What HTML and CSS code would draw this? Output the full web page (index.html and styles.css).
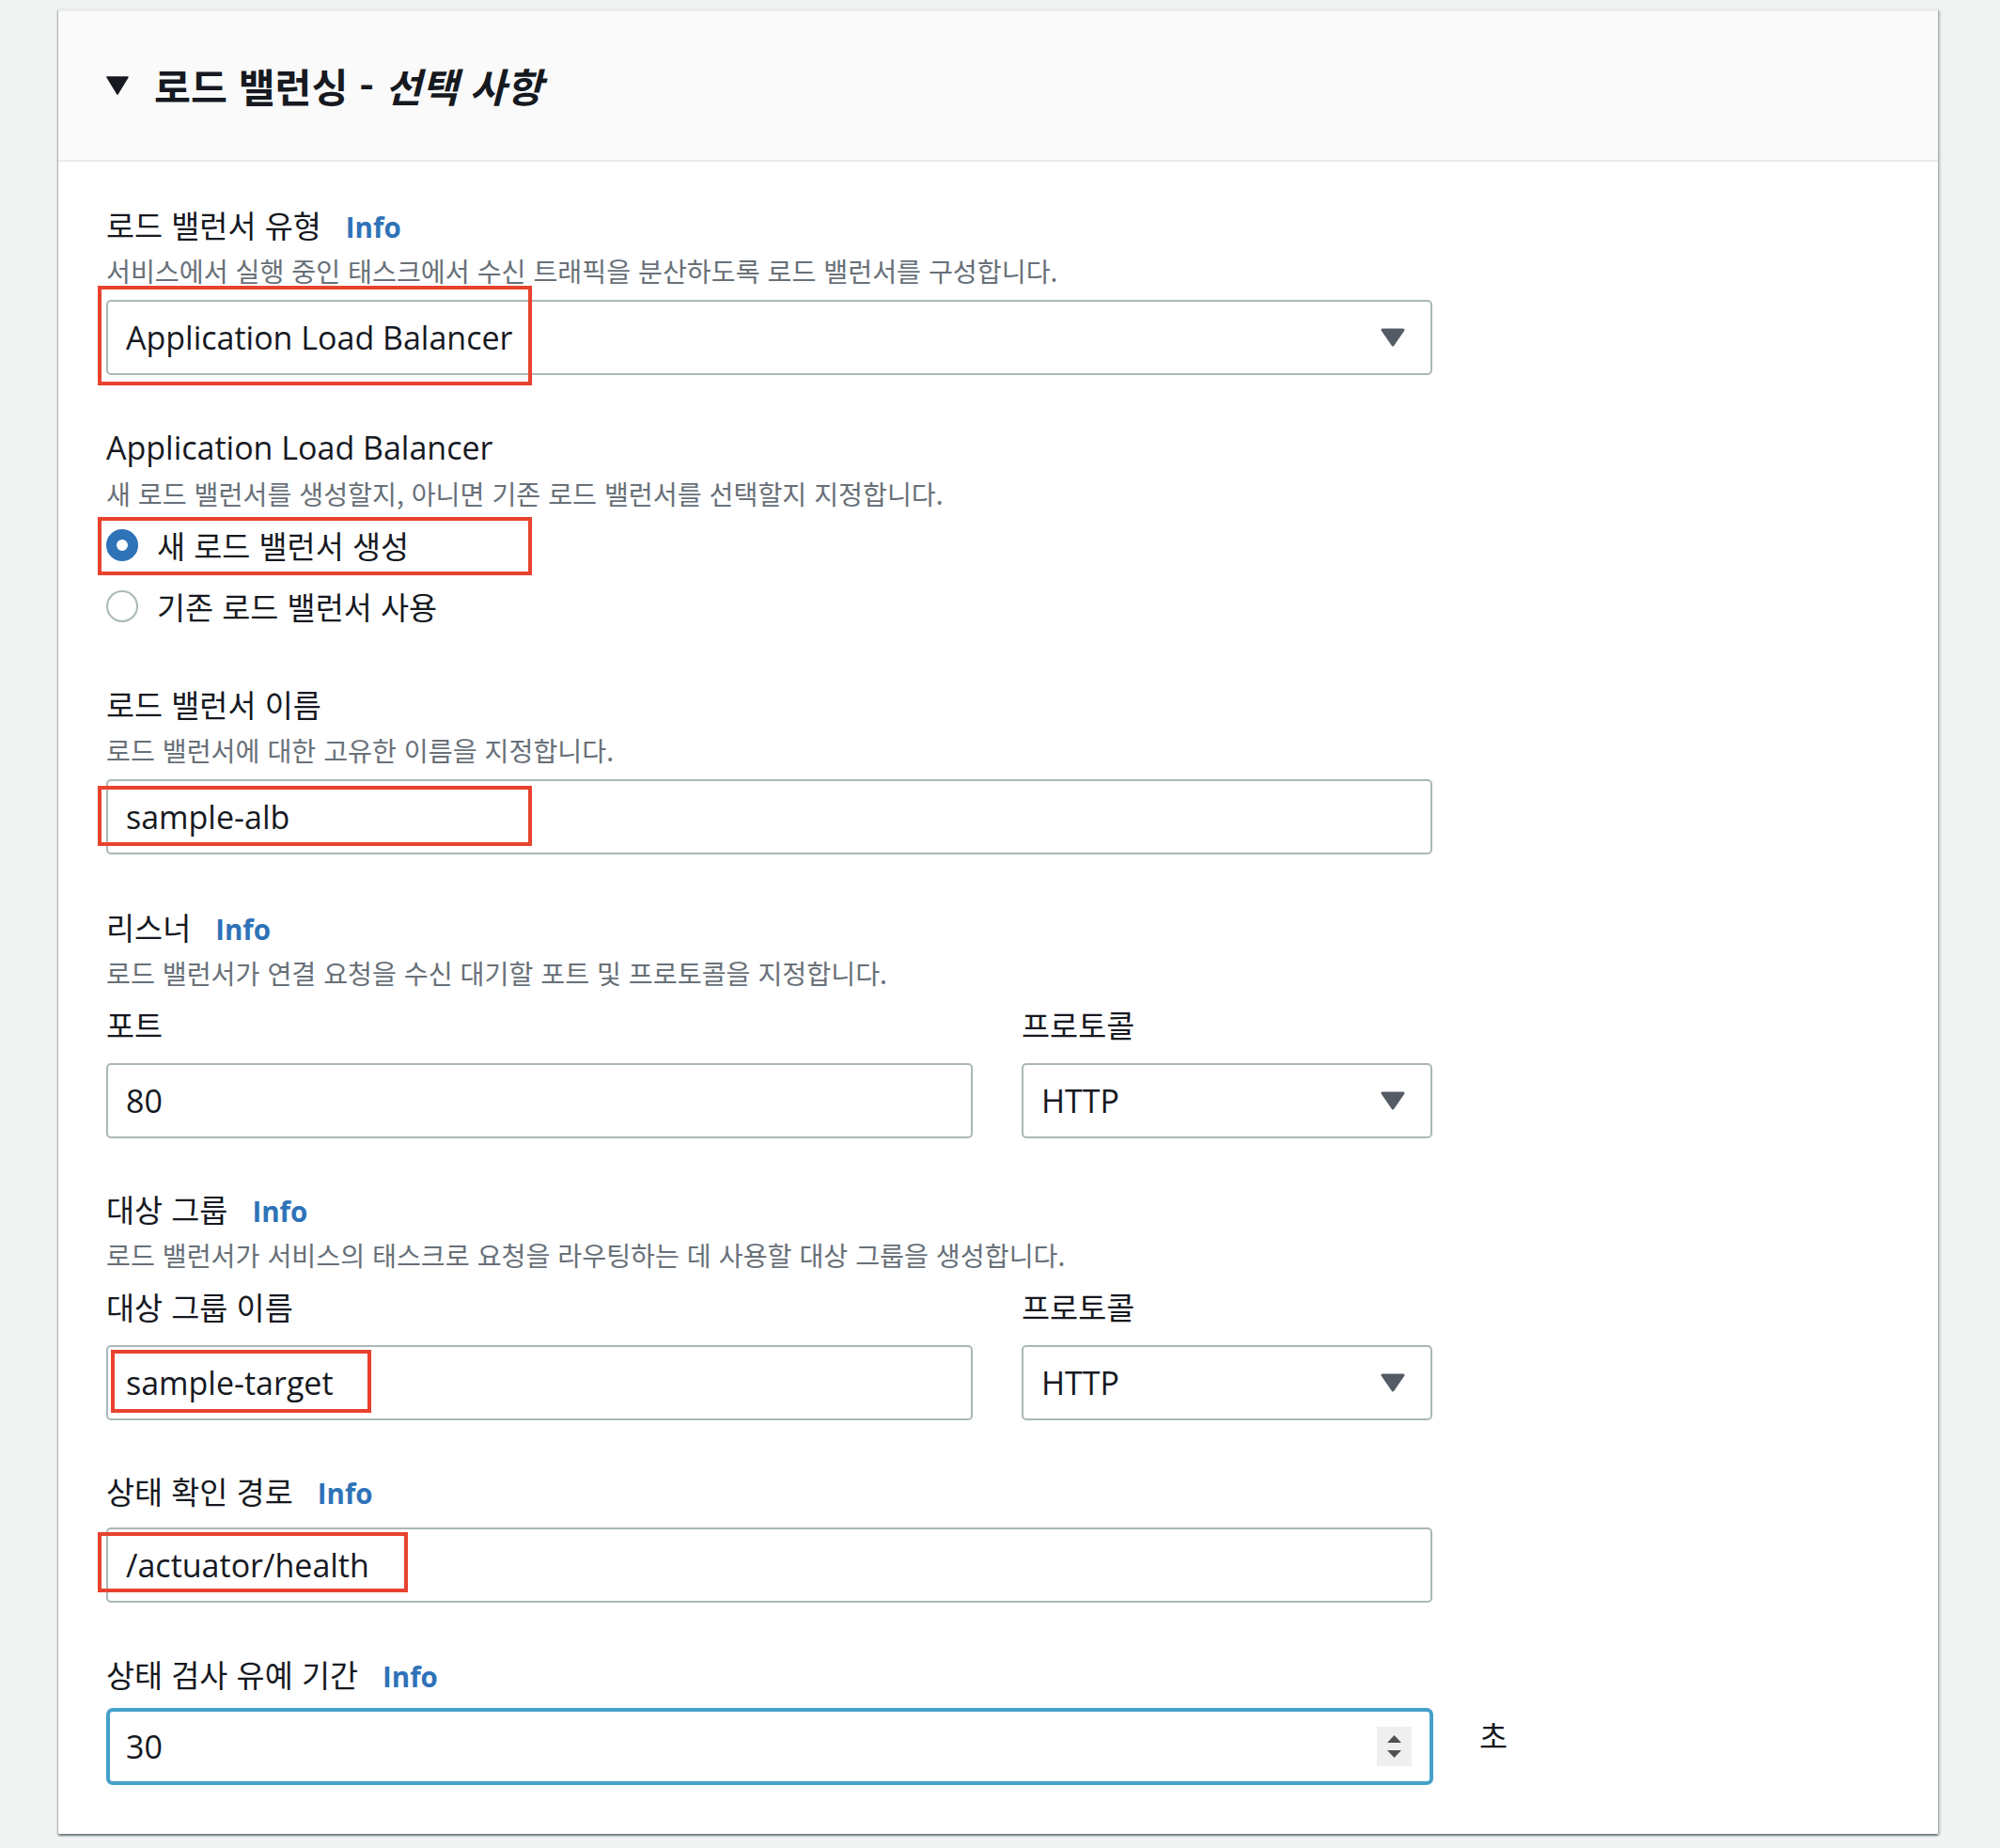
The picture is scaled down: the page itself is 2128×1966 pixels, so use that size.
FILE: index.html
```html
<!DOCTYPE html>
<html lang="ko">
<head>
<meta charset="utf-8">
<title>로드 밸런싱</title>
<link rel="stylesheet" href="styles.css">
</head>
<body>
<section class="card">
  <header class="card-header">
    <svg class="caret" width="24" height="20" viewBox="0 0 24 20"><path d="M1 1 H23 L12 19 Z" fill="#16191f" stroke="#16191f" stroke-width="1.5" stroke-linejoin="round"/></svg>
    <h2 class="title">로드 밸런싱 - <em>선택 사항</em></h2>
  </header>
  <div class="card-body">

    <div class="field">
      <div class="label-row"><span class="label">로드 밸런서 유형</span><span class="info">Info</span></div>
      <p class="desc">서비스에서 실행 중인 태스크에서 수신 트래픽을 분산하도록 로드 밸런서를 구성합니다.</p>
      <div class="control select after-desc">
        <span class="value">Application Load Balancer</span>
        <svg class="arrow" width="26" height="20" viewBox="0 0 26 20"><path d="M2 2 H24 L13 18 Z" fill="#545b64" stroke="#545b64" stroke-width="3" stroke-linejoin="round"/></svg>
        <span class="mark mark-alb-type"></span>
      </div>
    </div>

    <div class="field gap-a">
      <div class="label-row"><span class="label latin">Application Load Balancer</span></div>
      <p class="desc">새 로드 밸런서를 생성할지, 아니면 기존 로드 밸런서를 선택할지 지정합니다.</p>
      <div class="radios">
        <div class="radio-row">
          <span class="radio checked"></span><span class="radio-text">새 로드 밸런서 생성</span>
          <span class="mark mark-radio"></span>
        </div>
        <div class="radio-row">
          <span class="radio"></span><span class="radio-text">기존 로드 밸런서 사용</span>
        </div>
      </div>
    </div>

    <div class="field gap-c">
      <div class="label-row"><span class="label">로드 밸런서 이름</span></div>
      <p class="desc">로드 밸런서에 대한 고유한 이름을 지정합니다.</p>
      <div class="control after-desc">
        <span class="value">sample-alb</span>
        <span class="mark mark-name"></span>
      </div>
    </div>

    <div class="field gap-a">
      <div class="label-row"><span class="label">리스너</span><span class="info">Info</span></div>
      <p class="desc">로드 밸런서가 연결 요청을 수신 대기할 포트 및 프로토콜을 지정합니다.</p>
      <div class="split">
        <div class="col">
          <span class="sublabel">포트</span>
          <div class="control after-sub"><span class="value">80</span></div>
        </div>
        <div class="col">
          <span class="sublabel">프로토콜</span>
          <div class="control select after-sub">
            <span class="value">HTTP</span>
            <svg class="arrow" width="26" height="20" viewBox="0 0 26 20"><path d="M2 2 H24 L13 18 Z" fill="#545b64" stroke="#545b64" stroke-width="3" stroke-linejoin="round"/></svg>
          </div>
        </div>
      </div>
    </div>

    <div class="field gap-b">
      <div class="label-row"><span class="label">대상 그룹</span><span class="info">Info</span></div>
      <p class="desc">로드 밸런서가 서비스의 태스크로 요청을 라우팅하는 데 사용할 대상 그룹을 생성합니다.</p>
      <div class="split">
        <div class="col">
          <span class="sublabel">대상 그룹 이름</span>
          <div class="control after-sub">
            <span class="value">sample-target</span>
            <span class="mark mark-target"></span>
          </div>
        </div>
        <div class="col">
          <span class="sublabel">프로토콜</span>
          <div class="control select after-sub">
            <span class="value">HTTP</span>
            <svg class="arrow" width="26" height="20" viewBox="0 0 26 20"><path d="M2 2 H24 L13 18 Z" fill="#545b64" stroke="#545b64" stroke-width="3" stroke-linejoin="round"/></svg>
          </div>
        </div>
      </div>
    </div>

    <div class="field gap-b">
      <div class="label-row"><span class="label">상태 확인 경로</span><span class="info">Info</span></div>
      <div class="control after-label">
        <span class="value">/actuator/health</span>
        <span class="mark mark-health"></span>
      </div>
    </div>

    <div class="field gap-d">
      <div class="label-row"><span class="label">상태 검사 유예 기간</span><span class="info">Info</span></div>
      <div class="unit-row">
        <div class="control focused">
          <span class="value">30</span>
          <span class="spinner">
            <svg width="37" height="42" viewBox="0 0 37 42"><path d="M11 17 L18.5 9 L26 17 Z" fill="#505050"/><path d="M11 25 L18.5 33 L26 25 Z" fill="#505050"/></svg>
          </span>
        </div>
        <span class="unit">초</span>
      </div>
    </div>

  </div>
</section>
</body>
</html>
```

FILE: styles.css
```css
html, body {
  margin: 0;
  padding: 0;
}

body {
  background: #f2f3f3;
  padding: 10px 0 16px 62px;
  font-family: "Noto Sans CJK KR", "Open Sans", sans-serif;
  color: #16191f;
}

.card {
  width: 2000px;
  background: #ffffff;
  border-top: 2px solid #eaeded;
  box-shadow: 0 2px 2px rgba(0, 28, 36, 0.45), 2px 1px 3px rgba(0, 28, 36, 0.22), -1px 1px 2px rgba(0, 28, 36, 0.18);
}

.card-header {
  background: #fafafa;
  border-bottom: 2px solid #eaeded;
  height: 160px;
  box-sizing: border-box;
  padding: 0 51px;
  display: flex;
  align-items: center;
  gap: 27px;
}

.caret {
  display: block;
  flex: none;
}

.title {
  margin: 0;
  font-family: "Noto Sans CJK KR", sans-serif;
  font-weight: 700;
  font-size: 42.3px;
  line-height: 50px;
  color: #16191f;
}

.title em {
  font-style: italic;
}

.card-body {
  padding: 47px 51px 52px 51px;
  width: 1411px;
}

.field.gap-a {
  margin-top: 57px;
}

.field.gap-b {
  margin-top: 55px;
}

.field.gap-c {
  margin-top: 60px;
}

.field.gap-d {
  margin-top: 56px;
}

.label-row {
  display: flex;
  align-items: baseline;
  gap: 26px;
  height: 40px;
}

.label,
.sublabel,
.radio-text,
.unit {
  font-family: "Noto Sans CJK KR", sans-serif;
  font-size: 32.7px;
  line-height: 40px;
  color: #16191f;
}

.label.latin {
  font-family: "Open Sans", "Noto Sans CJK KR", sans-serif;
  font-size: 34px;
}

.info {
  font-family: "Open Sans", sans-serif;
  font-weight: 700;
  font-size: 29.5px;
  line-height: 40px;
  color: #2e72b8;
}

.desc {
  margin: 11px 0 0 0;
  font-family: "Noto Sans CJK KR", sans-serif;
  font-size: 28.2px;
  line-height: 36px;
  color: #687078;
}

.control {
  position: relative;
  box-sizing: border-box;
  height: 80px;
  border: 2px solid #aab7b8;
  border-radius: 5px;
  background: #ffffff;
  display: flex;
  align-items: center;
  padding: 0 27px 0 19px;
}

.control.after-desc {
  margin-top: 13px;
}

.control.after-label {
  margin-top: 19px;
}

.control.after-sub {
  margin-top: 21px;
}

.value {
  font-family: "Open Sans", "Noto Sans CJK KR", sans-serif;
  font-size: 34px;
  line-height: 40px;
  color: #16191f;
}

.select .arrow {
  margin-left: auto;
  display: block;
}

.radios {
  margin-top: 13px;
  display: flex;
  flex-direction: column;
  gap: 17px;
}

.radio-row {
  position: relative;
  display: flex;
  align-items: center;
  gap: 20px;
  height: 48px;
}

.radio {
  box-sizing: border-box;
  width: 34px;
  height: 34px;
  border-radius: 50%;
  border: 2px solid #aab7b8;
  background: #ffffff;
  flex: none;
}

.radio.checked {
  border: 11px solid #2e72b8;
}

.split {
  margin-top: 17px;
  display: grid;
  grid-template-columns: 922px 437px;
  column-gap: 52px;
}

.col {
  display: flex;
  flex-direction: column;
}

.unit-row {
  margin-top: 16px;
  display: flex;
  align-items: flex-start;
  gap: 49px;
}

.unit-row .control {
  width: 1412px;
  flex: none;
}

.control.focused {
  height: 82px;
  border: 4px solid #44a0c9;
  border-radius: 7px;
  padding-right: 19px;
  padding-left: 17px;
}

.spinner {
  margin-left: auto;
  width: 37px;
  height: 42px;
  background: #efefef;
  display: block;
}

.spinner svg {
  display: block;
}

.unit {
  margin-top: 9px;
}

/* red annotation boxes drawn over the form */
.mark {
  position: absolute;
  box-sizing: border-box;
  border: 4px solid #e8422f;
  pointer-events: none;
}

.mark-alb-type {
  left: -11px;
  top: -17px;
  width: 462px;
  height: 106px;
}

.mark-radio {
  left: -9px;
  top: -6px;
  width: 462px;
  height: 62px;
}

.mark-name {
  left: -11px;
  top: 5px;
  width: 462px;
  height: 64px;
}

.mark-target {
  left: 3px;
  top: 3px;
  width: 277px;
  height: 67px;
}

.mark-health {
  left: -11px;
  top: 3px;
  width: 330px;
  height: 64px;
}
```
